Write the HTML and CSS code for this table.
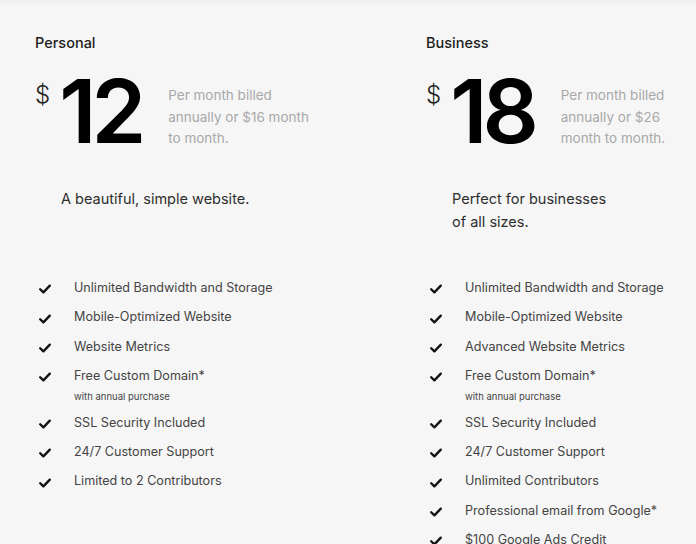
FILE: index.html
```html
<!DOCTYPE html>
<html lang="en">
<head>
<meta charset="utf-8">
<title>Pricing</title>
<link rel="stylesheet" href="styles.css">
</head>
<body>
<div class="plans">
  <section class="plan">
    <h2 class="plan-name">Personal</h2>
    <div class="price">
      <span class="currency">$</span>
      <span class="amount">12</span>
      <p class="billing">Per month billed annually or $16 month to month.</p>
    </div>
    <p class="tagline">A beautiful, simple website.</p>
    <ul class="features">
      <li><span class="check"><svg viewBox="0 0 12 10" width="12" height="10"><path d="M1.2 5.2 L4.4 8.4 L10.8 1.6" fill="none" stroke="#111" stroke-width="2.3" stroke-linecap="round" stroke-linejoin="round"/></svg></span><span>Unlimited Bandwidth and Storage</span></li>
      <li><span class="check"><svg viewBox="0 0 12 10" width="12" height="10"><path d="M1.2 5.2 L4.4 8.4 L10.8 1.6" fill="none" stroke="#111" stroke-width="2.3" stroke-linecap="round" stroke-linejoin="round"/></svg></span><span>Mobile-Optimized Website</span></li>
      <li><span class="check"><svg viewBox="0 0 12 10" width="12" height="10"><path d="M1.2 5.2 L4.4 8.4 L10.8 1.6" fill="none" stroke="#111" stroke-width="2.3" stroke-linecap="round" stroke-linejoin="round"/></svg></span><span>Website Metrics</span></li>
      <li><span class="check"><svg viewBox="0 0 12 10" width="12" height="10"><path d="M1.2 5.2 L4.4 8.4 L10.8 1.6" fill="none" stroke="#111" stroke-width="2.3" stroke-linecap="round" stroke-linejoin="round"/></svg></span><span>Free Custom Domain*<small class="note">with annual purchase</small></span></li>
      <li><span class="check"><svg viewBox="0 0 12 10" width="12" height="10"><path d="M1.2 5.2 L4.4 8.4 L10.8 1.6" fill="none" stroke="#111" stroke-width="2.3" stroke-linecap="round" stroke-linejoin="round"/></svg></span><span>SSL Security Included</span></li>
      <li><span class="check"><svg viewBox="0 0 12 10" width="12" height="10"><path d="M1.2 5.2 L4.4 8.4 L10.8 1.6" fill="none" stroke="#111" stroke-width="2.3" stroke-linecap="round" stroke-linejoin="round"/></svg></span><span>24/7 Customer Support</span></li>
      <li><span class="check"><svg viewBox="0 0 12 10" width="12" height="10"><path d="M1.2 5.2 L4.4 8.4 L10.8 1.6" fill="none" stroke="#111" stroke-width="2.3" stroke-linecap="round" stroke-linejoin="round"/></svg></span><span>Limited to 2 Contributors</span></li>
    </ul>
  </section>
  <section class="plan">
    <h2 class="plan-name">Business</h2>
    <div class="price">
      <span class="currency">$</span>
      <span class="amount">18</span>
      <p class="billing">Per month billed annually or $26 month to month.</p>
    </div>
    <p class="tagline">Perfect for businesses<br>of all sizes.</p>
    <ul class="features">
      <li><span class="check"><svg viewBox="0 0 12 10" width="12" height="10"><path d="M1.2 5.2 L4.4 8.4 L10.8 1.6" fill="none" stroke="#111" stroke-width="2.3" stroke-linecap="round" stroke-linejoin="round"/></svg></span><span>Unlimited Bandwidth and Storage</span></li>
      <li><span class="check"><svg viewBox="0 0 12 10" width="12" height="10"><path d="M1.2 5.2 L4.4 8.4 L10.8 1.6" fill="none" stroke="#111" stroke-width="2.3" stroke-linecap="round" stroke-linejoin="round"/></svg></span><span>Mobile-Optimized Website</span></li>
      <li><span class="check"><svg viewBox="0 0 12 10" width="12" height="10"><path d="M1.2 5.2 L4.4 8.4 L10.8 1.6" fill="none" stroke="#111" stroke-width="2.3" stroke-linecap="round" stroke-linejoin="round"/></svg></span><span>Advanced Website Metrics</span></li>
      <li><span class="check"><svg viewBox="0 0 12 10" width="12" height="10"><path d="M1.2 5.2 L4.4 8.4 L10.8 1.6" fill="none" stroke="#111" stroke-width="2.3" stroke-linecap="round" stroke-linejoin="round"/></svg></span><span>Free Custom Domain*<small class="note">with annual purchase</small></span></li>
      <li><span class="check"><svg viewBox="0 0 12 10" width="12" height="10"><path d="M1.2 5.2 L4.4 8.4 L10.8 1.6" fill="none" stroke="#111" stroke-width="2.3" stroke-linecap="round" stroke-linejoin="round"/></svg></span><span>SSL Security Included</span></li>
      <li><span class="check"><svg viewBox="0 0 12 10" width="12" height="10"><path d="M1.2 5.2 L4.4 8.4 L10.8 1.6" fill="none" stroke="#111" stroke-width="2.3" stroke-linecap="round" stroke-linejoin="round"/></svg></span><span>24/7 Customer Support</span></li>
      <li><span class="check"><svg viewBox="0 0 12 10" width="12" height="10"><path d="M1.2 5.2 L4.4 8.4 L10.8 1.6" fill="none" stroke="#111" stroke-width="2.3" stroke-linecap="round" stroke-linejoin="round"/></svg></span><span>Unlimited Contributors</span></li>
      <li><span class="check"><svg viewBox="0 0 12 10" width="12" height="10"><path d="M1.2 5.2 L4.4 8.4 L10.8 1.6" fill="none" stroke="#111" stroke-width="2.3" stroke-linecap="round" stroke-linejoin="round"/></svg></span><span>Professional email from Google*</span></li>
      <li><span class="check"><svg viewBox="0 0 12 10" width="12" height="10"><path d="M1.2 5.2 L4.4 8.4 L10.8 1.6" fill="none" stroke="#111" stroke-width="2.3" stroke-linecap="round" stroke-linejoin="round"/></svg></span><span>$100 Google Ads Credit</span></li>
    </ul>
  </section>
</div>
</body>
</html>
```

FILE: styles.css
```css
html, body {
  margin: 0;
  padding: 0;
}
body {
  background: #f6f6f6 linear-gradient(to bottom, #eeeeee 0, #f6f6f6 6px) no-repeat;
  font-family: Inter, "Noto Sans", "Liberation Sans", sans-serif;
  color: #333;
  overflow: hidden;
  height: 544px;
}
.plans {
  display: grid;
  grid-template-columns: 391px 270px;
  padding-left: 35px;
}
.plan {
  padding-top: 33px;
  min-width: 0;
}
.plan-name {
  margin: 0;
  font-size: 14.5px;
  line-height: 20px;
  font-weight: 500;
  color: #1c1c1c;
}
.price {
  display: flex;
  align-items: flex-start;
  margin-top: 14px;
  height: 88px;
}
.currency {
  font-size: 24px;
  line-height: 24px;
  font-weight: 300;
  color: #222;
  margin-top: 16px;
  margin-right: 9px;
}
.amount {
  font-size: 88px;
  line-height: 88px;
  font-weight: 600;
  letter-spacing: -5px;
  color: #000;
  margin-right: 27px;
}
.billing {
  margin: 18px 0 0;
  max-width: 146px;
  min-width: 0;
  flex: 1;
  font-size: 13.5px;
  line-height: 21.5px;
  color: #a8a8a8;
}
.tagline {
  margin: 32px 0 0 26px;
  min-height: 46px;
  font-size: 14.5px;
  line-height: 23px;
  color: #2e2e2e;
}
.features {
  list-style: none;
  margin: 40px 0 0;
  padding: 0 0 0 4px;
}
.features li {
  display: flex;
  align-items: flex-start;
  font-size: 12.6px;
  line-height: 29.4px;
  color: #444;
}
.check {
  flex: none;
  width: 35px;
  height: 29.4px;
  display: flex;
  align-items: center;
  padding-top: 3px;
  box-sizing: border-box;
}
.note {
  display: block;
  font-size: 9.5px;
  line-height: 12px;
  margin-bottom: 5px;
  color: #444;
}
```
